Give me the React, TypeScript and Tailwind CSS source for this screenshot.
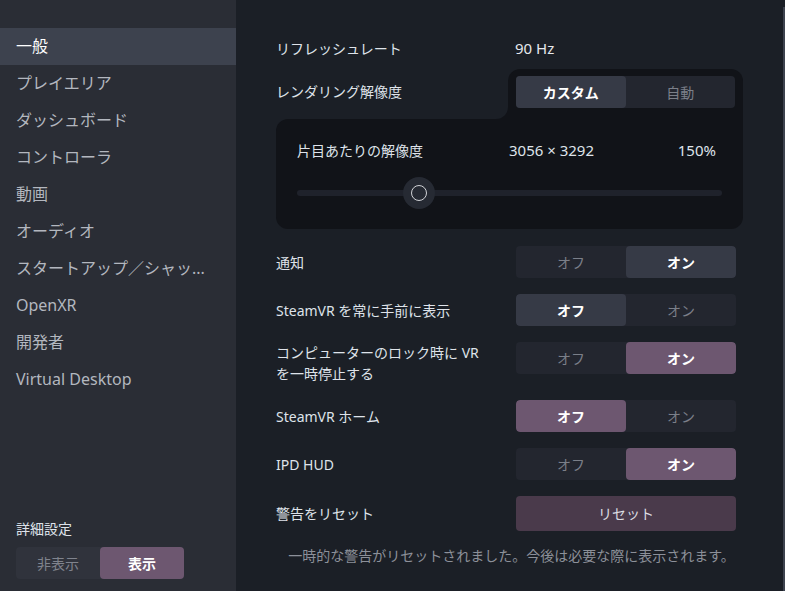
import React from "react";

const navItems = [
  "一般",
  "プレイエリア",
  "ダッシュボード",
  "コントローラ",
  "動画",
  "オーディオ",
  "スタートアップ／シャッ...",
  "OpenXR",
  "開発者",
  "Virtual Desktop",
];

type ToggleProps = { value: "off" | "on"; accent: "gray" | "purple" };

function Toggle({ value, accent }: ToggleProps) {
  const sel = accent === "purple" ? "bg-[#6d5770]" : "bg-[#363a46]";
  return (
    <div className="flex w-[220px] h-[32px] rounded-[4px] bg-[#23262f] overflow-hidden text-[14px]">
      <div
        className={
          "flex-1 flex items-center justify-center rounded-[4px] " +
          (value === "off" ? sel + " text-white font-bold" : "text-[#7b7f89]")
        }
      >
        オフ
      </div>
      <div
        className={
          "flex-1 flex items-center justify-center rounded-[4px] " +
          (value === "on" ? sel + " text-white font-bold" : "text-[#7b7f89]")
        }
      >
        オン
      </div>
    </div>
  );
}

function Row({ label, children }: { label: React.ReactNode; children: React.ReactNode }) {
  return (
    <div className="flex items-start">
      <div className="w-[240px] min-h-[32px] flex items-center text-[14px] leading-[21px] text-[#dfe3ea]">
        {label}
      </div>
      {children}
    </div>
  );
}

export default function App() {
  return (
    <div className="w-[785px] h-[591px] flex overflow-hidden bg-[#1b1f26] font-['Noto_Sans','Noto_Sans_CJK_JP',sans-serif]">
      {/* Sidebar */}
      <div className="w-[236px] h-full bg-[#2a2d35] flex flex-col shrink-0">
        <div className="pt-[28px]">
          {navItems.map((item, i) => (
            <div
              key={item}
              className={
                "h-[37px] flex items-center px-[16px] pb-[1px] text-[16px] whitespace-nowrap " +
                (i === 0 ? "bg-[#3d424e] text-white" : "text-[#b3b7bf]")
              }
            >
              {item}
            </div>
          ))}
        </div>
        <div className="flex-1" />
        <div className="px-[16px] pb-[12px]">
          <div className="text-[14px] text-[#dfe3ea] leading-[20px] mb-[8px]">詳細設定</div>
          <div className="flex w-[168px] h-[32px] rounded-[4px] bg-[#30333c] text-[14px]">
            <div className="flex-1 flex items-center justify-center text-[#80848e]">非表示</div>
            <div className="flex-1 flex items-center justify-center rounded-[4px] bg-[#6d5770] text-white font-bold">
              表示
            </div>
          </div>
        </div>
      </div>

      {/* Main */}
      <div className="flex-1 relative h-full">
        <div className="absolute right-0 top-[7px] bottom-0 w-[2px] bg-[#3d424e]" />
        <div className="pl-[40px] pr-[42px] pt-[32px] flex flex-col">
          {/* Refresh rate */}
          <div className="flex items-center h-[32px]">
            <div className="w-[239px] text-[14px] text-[#dfe3ea]">リフレッシュレート</div>
            <div className="text-[15px] text-[#e6e8ec]">90 Hz</div>
          </div>

          {/* Rendering resolution */}
          <div className="flex mt-[5px]">
            <div className="flex-1 relative flex items-start">
              <div className="h-[44px] flex items-center text-[14px] text-[#dfe3ea]">
                レンダリング解像度
              </div>
              <div className="absolute right-0 bottom-0 w-[12px] h-[12px] bg-[#111318]">
                <div className="w-full h-full bg-[#1b1f26] rounded-br-[12px]" />
              </div>
            </div>
            <div className="w-[235px] bg-[#111318] rounded-t-[12px] pt-[7px] pb-[11px] px-[8px]">
              <div className="flex h-[32px] rounded-[4px] bg-[#23262f] text-[14px]">
                <div className="flex-1 flex items-center justify-center rounded-[4px] bg-[#363a46] text-white font-bold">
                  カスタム
                </div>
                <div className="flex-1 flex items-center justify-center text-[#7b7f89]">自動</div>
              </div>
            </div>
          </div>
          <div className="bg-[#111318] rounded-b-[12px] rounded-tl-[12px] h-[110px] px-[21px] pt-[20px]">
            <div className="flex items-center h-[22px] text-[14px] text-[#dfe3ea]">
              <div className="w-[212px]">片目あたりの解像度</div>
              <div className="flex-1 text-[15px]">3056 × 3292</div>
              <div className="pr-[6px] text-[15px]">150%</div>
            </div>
            <div className="relative mt-[16px] h-[32px] flex items-center">
              <div className="w-[425px] h-[6px] rounded-full bg-[#1f222b]" />
              <div className="absolute left-[106px] top-0 w-[32px] h-[32px] rounded-full bg-[#262a33] flex items-center justify-center">
                <div className="w-[16px] h-[16px] rounded-full border-[1.5px] border-[#d0d2d6]" />
              </div>
            </div>
          </div>

          {/* Toggles */}
          <div className="flex flex-col gap-[16px] mt-[17px]">
            <Row label="通知">
              <Toggle value="on" accent="gray" />
            </Row>
            <Row label="SteamVR を常に手前に表示">
              <Toggle value="off" accent="gray" />
            </Row>
            <Row
              label={
                <span>
                  コンピューターのロック時に VR
                  <br />
                  を一時停止する
                </span>
              }
            >
              <Toggle value="on" accent="purple" />
            </Row>
            <Row label="SteamVR ホーム">
              <Toggle value="off" accent="purple" />
            </Row>
            <Row label="IPD HUD">
              <Toggle value="on" accent="purple" />
            </Row>
            <div className="flex items-center">
              <div className="w-[240px] text-[14px] text-[#dfe3ea]">警告をリセット</div>
              <div className="w-[220px] h-[35px] rounded-[4px] bg-[#4a3a4b] flex items-center justify-center text-[14px] text-[#dcdde2]">
                リセット
              </div>
            </div>
          </div>
          <div className="mt-[14px] text-center text-[14px] text-[#8c9099] pl-[4px]">
            一時的な警告がリセットされました。今後は必要な際に表示されます。
          </div>
        </div>
      </div>
    </div>
  );
}
